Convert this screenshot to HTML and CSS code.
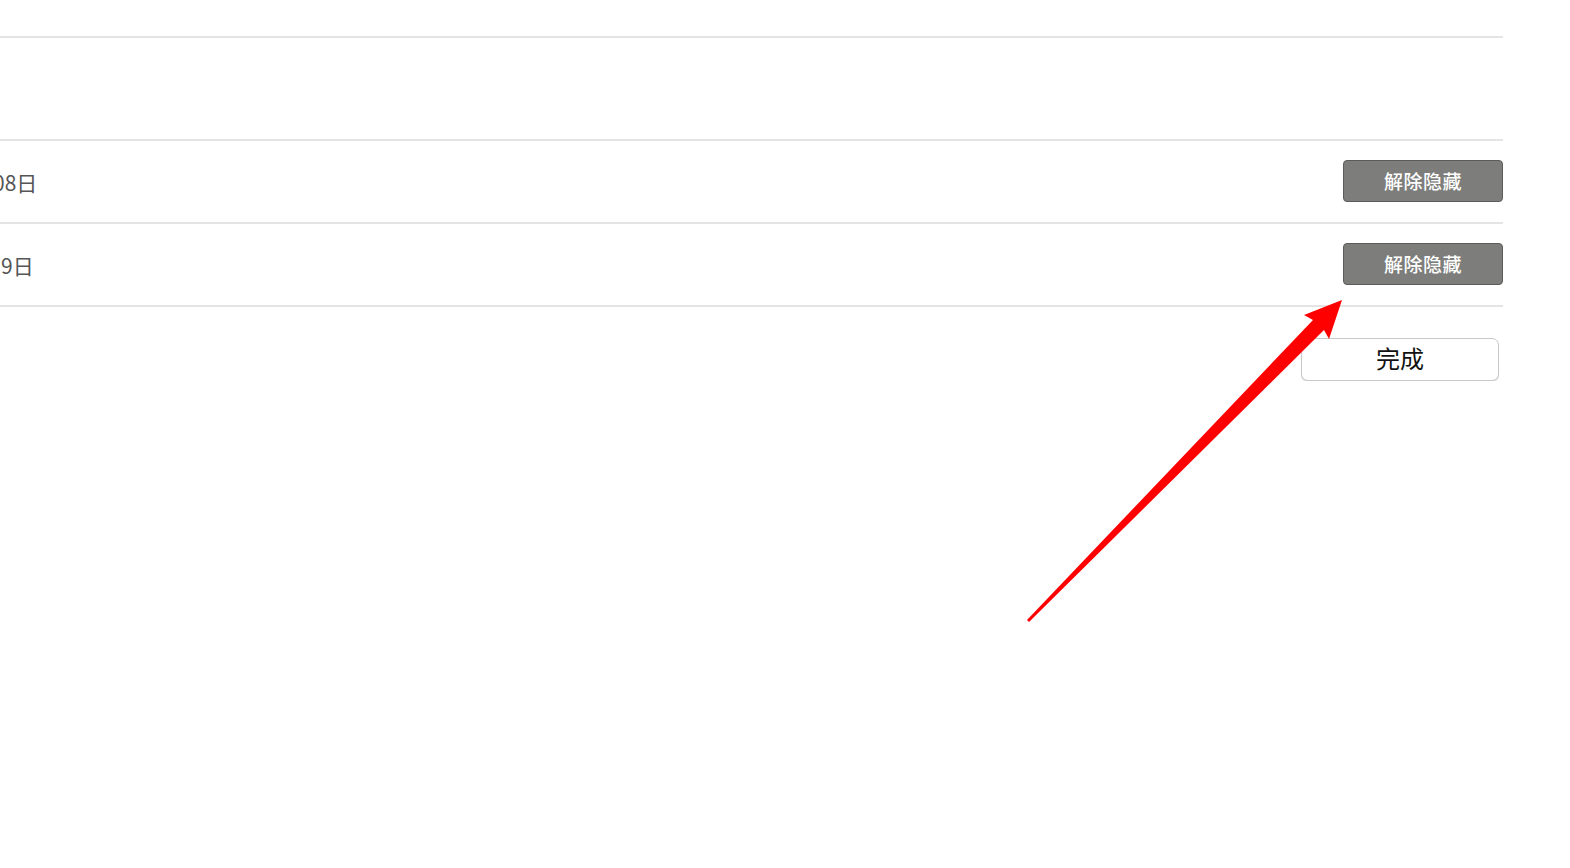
FILE: index.html
```html
<!DOCTYPE html>
<html lang="zh-CN">
<head>
    <meta charset="UTF-8">
    <title>隐藏的项目</title>
    <link rel="stylesheet" href="styles.css">
</head>
<body>
    <div class="panel">
        <div class="list">
            <div class="row row-top"></div>
            <div class="row row-empty"></div>
            <div class="row">
                <span class="date date-first">08日</span>
                <button class="unhide">解除隐藏</button>
            </div>
            <div class="row">
                <span class="date date-second">9日</span>
                <button class="unhide">解除隐藏</button>
            </div>
        </div>
        <div class="footer">
            <button class="done">完成</button>
        </div>
    </div>

    <!-- 标注箭头 -->
    <svg class="arrow" width="1570" height="868" viewBox="0 0 1570 868">
        <polygon fill="#ff0000" points="1342,300 1304,315 1313,320 1027,620 1029,622 1324,330 1329,339"/>
    </svg>
</body>
</html>
```

FILE: styles.css
```css
body {
    margin: 0;
    background: #ffffff;
    font-family: "Noto Sans CJK SC", "Noto Sans", sans-serif;
    overflow: hidden;
}

.panel {
    width: 1503px;
}

.list {
    display: flex;
    flex-direction: column;
}

.row {
    display: flex;
    align-items: center;
    justify-content: space-between;
    height: 81px;
    border-bottom: 2px solid #e4e4e4;
    overflow: hidden;
}

.row-top {
    height: 36px;
}

.row-empty {
    height: 101px;
}

.date {
    font-size: 21px;
    color: #555555;
    white-space: nowrap;
    padding-top: 1px;
}

.date-first {
    margin-left: -7px;
}

.date-second {
    margin-left: 1px;
}

.unhide {
    width: 160px;
    height: 42px;
    margin-top: -1px;
    background: #7d7e7b;
    border: 1px solid #5c5d5b;
    border-radius: 4px;
    color: #ffffff;
    font-family: inherit;
    font-size: 19px;
    font-weight: 500;
    letter-spacing: 0.5px;
    padding: 0 0 2px;
}

.footer {
    display: flex;
    justify-content: flex-end;
    padding: 31px 4px 0 0;
}

.done {
    width: 198px;
    height: 43px;
    background: #ffffff;
    border: 1px solid #c9c9c9;
    border-radius: 7px;
    box-shadow: 0 1px 1px rgba(0, 0, 0, 0.15);
    color: #111111;
    font-family: inherit;
    font-size: 24px;
    padding: 0 0 5px;
}

.arrow {
    position: absolute;
    top: 0;
    left: 0;
    pointer-events: none;
}
```
